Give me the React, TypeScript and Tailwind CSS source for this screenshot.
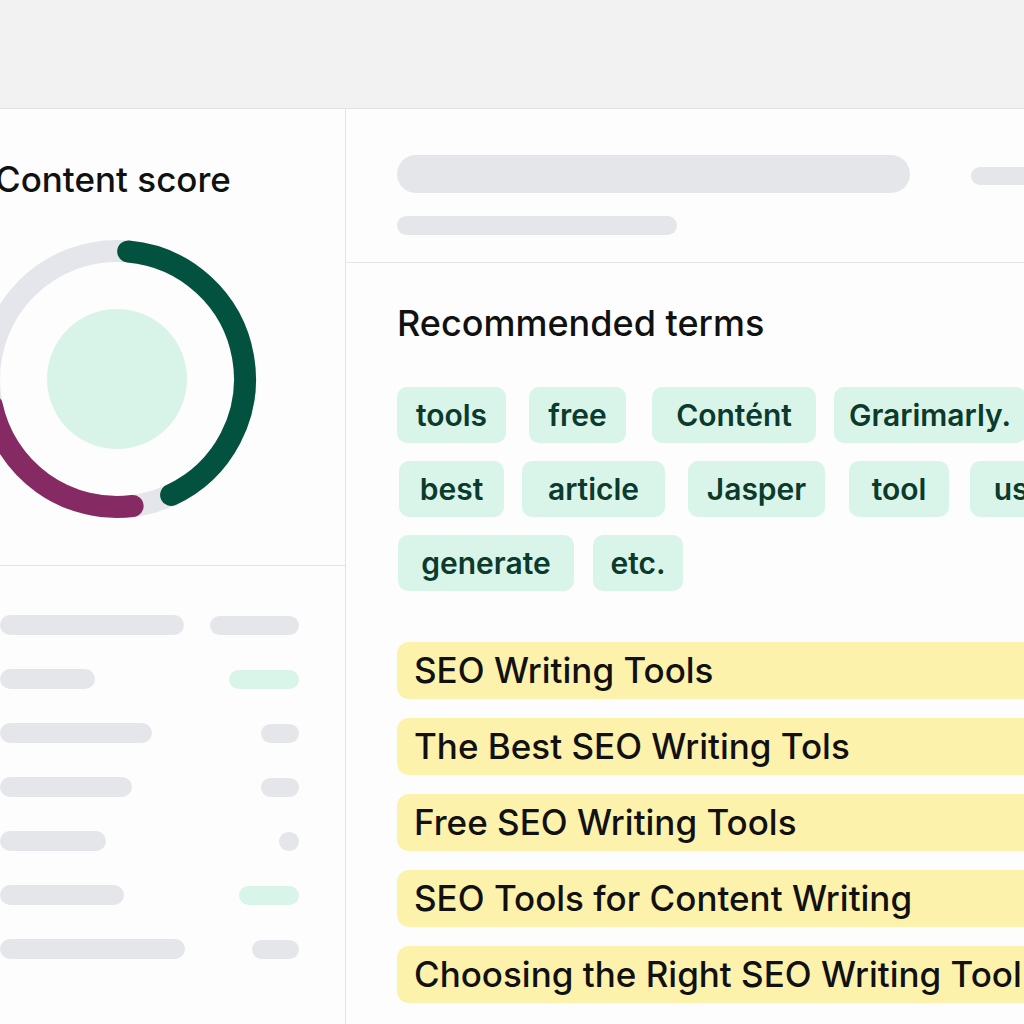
import React from "react";

const font = { fontFamily: "Inter, 'Noto Sans', sans-serif" };

// left panel skeleton rows: end of the left bar, and the right pill
const scoreRows = [
  { left: 184, right: { w: 89, green: false } },
  { left: 95, right: { w: 70, green: true } },
  { left: 152, right: { w: 38, green: false } },
  { left: 132, right: { w: 38, green: false } },
  { left: 106, right: { w: 20, green: false } },
  { left: 124, right: { w: 60, green: true } },
  { left: 185, right: { w: 47, green: false } },
];

const termRows = [
  [
    { t: "tools", w: 109, ml: 0 },
    { t: "free", w: 97, ml: 23 },
    { t: "Contént", w: 164, ml: 26 },
    { t: "Grarimarly.", w: 192, ml: 18 },
  ],
  [
    { t: "best", w: 105, ml: 2 },
    { t: "article", w: 143, ml: 18 },
    { t: "Jasper", w: 137, ml: 23 },
    { t: "tool", w: 100, ml: 24 },
    { t: "use", w: 100, ml: 21 },
  ],
  [
    { t: "generate", w: 176, ml: 1 },
    { t: "etc.", w: 90, ml: 19 },
  ],
];

const headings = [
  "SEO Writing Tools",
  "The Best SEO Writing Tols",
  "Free SEO Writing Tools",
  "SEO Tools for Content Writing",
  "Choosing the Right SEO Writing Tool",
];

function pt(angle: number, r = 128, c = 140) {
  const a = (angle * Math.PI) / 180;
  return `${(c + r * Math.sin(a)).toFixed(1)} ${(c - r * Math.cos(a)).toFixed(1)}`;
}

function ScoreRing() {
  return (
    <svg width="280" height="280" viewBox="0 0 280 280" className="block shrink-0">
      <circle cx="140" cy="140" r="128" fill="none" stroke="#e5e6eb" strokeWidth="22" />
      <circle cx="140" cy="140" r="70" fill="#d8f4e8" />
      {/* green arc, from just right of top round to lower right */}
      <path
        d={`M ${pt(5)} A 128 128 0 0 1 ${pt(155)}`}
        fill="none"
        stroke="#03523f"
        strokeWidth="22"
        strokeLinecap="round"
      />
      {/* purple arc along the lower left */}
      <path
        d={`M ${pt(173)} A 128 128 0 0 1 ${pt(258)}`}
        fill="none"
        stroke="#862a63"
        strokeWidth="22"
        strokeLinecap="round"
      />
    </svg>
  );
}

export default function App() {
  return (
    <div className="w-[1024px] h-[1024px] overflow-hidden bg-[#fdfdfd] flex flex-col" style={font}>
      {/* top bar */}
      <div className="h-[109px] shrink-0 bg-[#f2f2f2] border-b border-[#e3e3e3]" />

      <div className="flex flex-1 min-h-0">
        {/* left column: content score */}
        <div className="w-[346px] shrink-0 border-r border-[#e3e3e3] flex flex-col overflow-hidden">
          <div className="h-[457px] shrink-0 border-b border-[#e3e3e3] flex flex-col">
            <h2 className="mt-[53px] -ml-[5px] text-[35px] leading-none font-medium text-[#111] whitespace-nowrap">
              Content score
            </h2>
            <div className="mt-[42px] -ml-[23px]">
              <ScoreRing />
            </div>
          </div>

          <div className="flex flex-col gap-[34px] pt-[49px]">
            {scoreRows.map((r, i) => (
              <div key={i} className="flex items-center h-[20px] pr-[46px]">
                <div className="h-[20px] rounded-full bg-[#e5e6ea]" style={{ width: r.left }} />
                <div className="flex-1" />
                <div
                  className={`h-[19px] rounded-full ${r.right.green ? "bg-[#d9f5ea]" : "bg-[#e5e6ea]"}`}
                  style={{ width: r.right.w }}
                />
              </div>
            ))}
          </div>
        </div>

        {/* right column */}
        <div className="flex-1 min-w-0 flex flex-col overflow-hidden">
          <div className="h-[154px] shrink-0 border-b border-[#e6e6e8] pl-[51px] pt-[46px]">
            <div className="flex items-start">
              <div className="w-[513px] h-[38px] shrink-0 rounded-[19px] bg-[#e5e6ea]" />
              <div className="w-[100px] h-[18px] shrink-0 ml-[61px] mt-[12px] rounded-full bg-[#e5e6ea]" />
            </div>
            <div className="w-[280px] h-[19px] mt-[23px] rounded-full bg-[#e5e6ea]" />
          </div>

          <div className="pl-[51px] pt-[42px] flex flex-col">
            <h2 className="text-[36px] leading-none font-medium text-[#111] whitespace-nowrap">
              Recommended terms
            </h2>

            <div className="mt-[46px] flex flex-col gap-[18px]">
              {termRows.map((row, i) => (
                <div key={i} className="flex flex-nowrap">
                  {row.map((c) => (
                    <div
                      key={c.t}
                      className="h-[56px] shrink-0 rounded-[10px] bg-[#d9f5ea] flex items-center justify-center text-[30px] font-semibold text-[#0c3a2c] whitespace-nowrap"
                      style={{ width: c.w, marginLeft: c.ml }}
                    >
                      {c.t}
                    </div>
                  ))}
                </div>
              ))}
            </div>

            <div className="mt-[51px] flex flex-col gap-[19px]">
              {headings.map((h) => (
                <div
                  key={h}
                  className="h-[57px] w-[700px] shrink-0 rounded-[12px] bg-[#fdf2ab] flex items-center pl-[17px] text-[35px] font-medium text-[#111] whitespace-nowrap"
                >
                  {h}
                </div>
              ))}
            </div>
          </div>
        </div>
      </div>
    </div>
  );
}
